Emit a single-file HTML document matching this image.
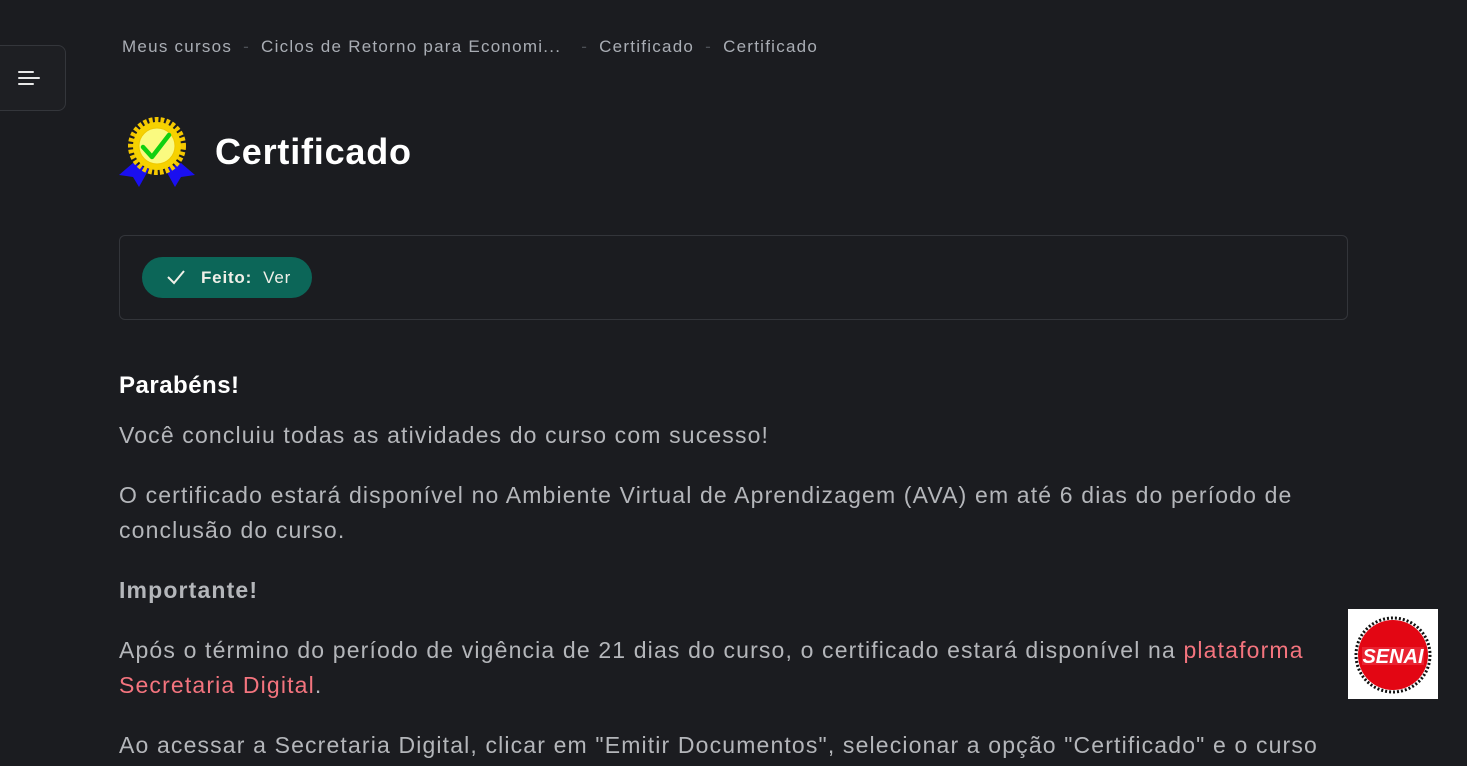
<!DOCTYPE html>
<html style="overflow:hidden"><head><meta charset="utf-8"><style>
html,body{overflow:hidden}
body{margin:0;background:#1b1c20;font-family:"Liberation Sans",sans-serif;width:1467px;height:766px;position:relative;color:#b4b6ba}
.side{position:absolute;left:-10px;top:45px;width:74px;height:64px;border:1px solid #34363b;border-radius:8px;background:#1e1f23}
.side i{position:absolute;left:27px;height:2px;background:#e8e8e8;border-radius:1px}
.bc{position:absolute;left:122px;top:37px;font-size:17px;color:#a9adb4;letter-spacing:1.25px;white-space:nowrap}
.bc span.s{color:#4c4f55;margin:0 11px}
h1{position:absolute;left:215px;top:131px;margin:0;font-size:36px;color:#fff;font-weight:bold;letter-spacing:0.8px}
.box{position:absolute;left:119px;top:235px;width:1227px;height:83px;border:1px solid #33353a;border-radius:6px}
.pill{position:absolute;left:22px;top:21px;width:170px;height:41px;border-radius:21px;background:#0c6658;color:#f0f0e8;font-size:17px;line-height:41px;letter-spacing:0.8px}
.content{position:absolute;left:119px;top:368px;width:1190px;font-size:23px;line-height:35px;letter-spacing:1.15px}
p{margin:0 0 25px}
.h{color:#fff;font-weight:bold;font-size:24px;margin:0 0 15px;letter-spacing:0.5px}
a{color:#f4747e;text-decoration:none}
.senai{position:absolute;left:1348px;top:609px;width:90px;height:90px;background:#fff}
</style></head><body>
<div class="side"><i style="top:25px;width:16px"></i><i style="top:31px;width:22px"></i><i style="top:37px;width:16px"></i></div>
<div class="bc">Meus cursos<span class="s">-</span>Ciclos de Retorno para Economi...<span class="s" style="margin-left:20px">-</span>Certificado<span class="s">-</span>Certificado</div>
<svg style="position:absolute;left:119px;top:113px" width="76" height="76" viewBox="0 0 76 76">
<polygon points="14,50 0,62 14,64 20,74 30,56" fill="#1a0ff0"/>
<polygon points="62,50 76,62 62,64 56,74 46,56" fill="#1a0ff0"/>
<circle cx="38" cy="33" r="25" fill="none" stroke="#f5c800" stroke-width="8" stroke-dasharray="3.5 2"/>
<circle cx="38" cy="33" r="24" fill="#f6d200"/>
<circle cx="38" cy="33" r="18" fill="#fafa80" stroke="#efc800" stroke-width="1"/>
<path d="M24,34 L33,44 L50,22" fill="none" stroke="#10d010" stroke-width="4.5" stroke-linecap="round" stroke-linejoin="round"/>
</svg>
<h1>Certificado</h1>
<div class="box"><div class="pill"><svg style="position:absolute;left:25px;top:12px" width="18" height="16" viewBox="0 0 18 16"><path d="M1,8 L7,14 L17,2" fill="none" stroke="#f0f0e8" stroke-width="2"/></svg><span style="position:absolute;left:59px"><b>Feito:</b>&nbsp; Ver</span></div></div>
<div class="content">
<p class="h">Parabéns!</p>
<p>Você concluiu todas as atividades do curso com sucesso!</p>
<p>O certificado estará disponível no Ambiente Virtual de Aprendizagem (AVA) em até 6 dias do período de conclusão do curso.</p>
<p><b>Importante!</b></p>
<p>Após o término do período de vigência de 21 dias do curso, o certificado estará disponível na <a>plataforma Secretaria Digital</a>.</p>
<p style="white-space:nowrap">Ao acessar a Secretaria Digital, clicar em "Emitir Documentos", selecionar a opção "Certificado" e o curso</p>
</div>
<div class="senai"><svg width="90" height="90" viewBox="0 0 90 90"><circle cx="45" cy="46" r="37" fill="none" stroke="#111" stroke-width="3" stroke-dasharray="2 2"/><circle cx="45" cy="46" r="35" fill="#e30613"/><rect x="14" y="38" width="62" height="18" fill="#f04050" opacity=".5"/><text x="45" y="54" text-anchor="middle" font-family="Liberation Sans" font-weight="bold" font-style="italic" font-size="20" fill="#fff">SENAI</text></svg></div>
</body></html>
